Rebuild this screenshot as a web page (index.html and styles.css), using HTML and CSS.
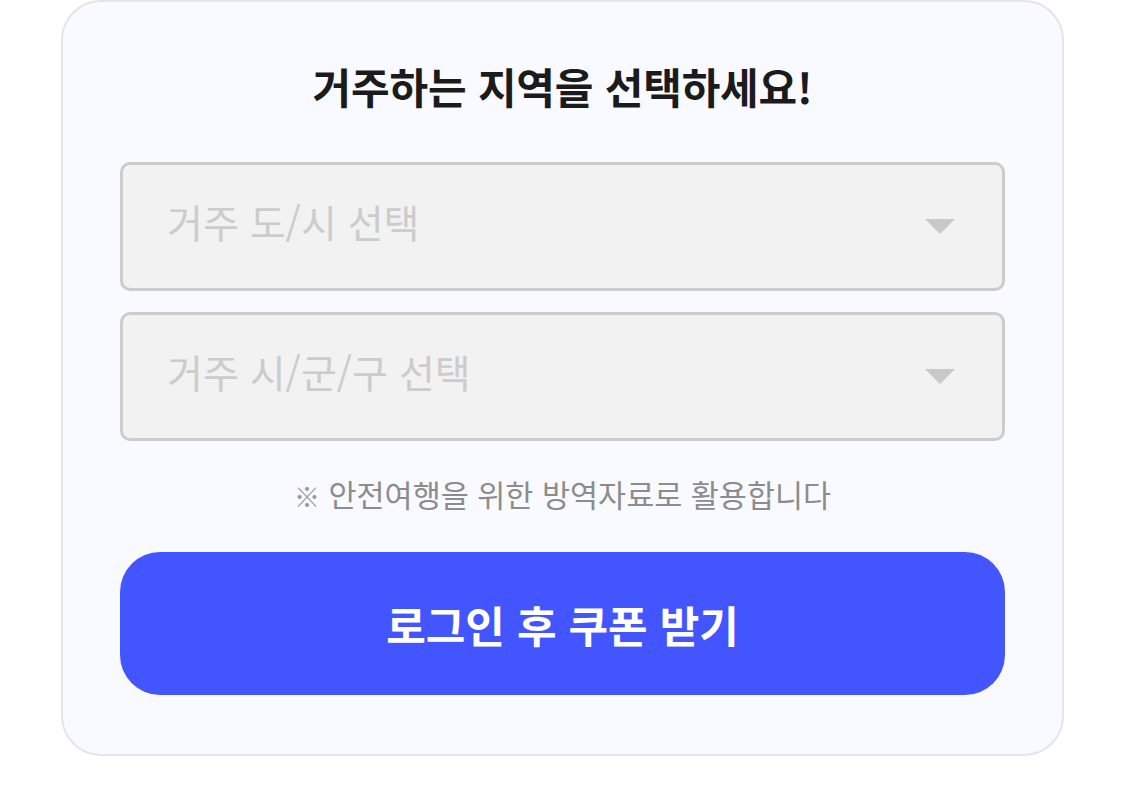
FILE: index.html
```html
<!DOCTYPE html>
<html lang="ko">
<head>
  <meta charset="UTF-8">
  <meta name="viewport" content="width=device-width, initial-scale=1.0">
  <title>지역 선택</title>
  <link rel="stylesheet" href="styles.css">
</head>
<body>

  <div class="card">
    <h2 class="title">거주하는 지역을 선택하세요!</h2>

    <div class="select-box">
      <span class="placeholder">거주 도/시 선택</span>
      <svg class="arrow" width="30" height="15" viewBox="0 0 30 15"><path d="M0 0 H30 L15 15 Z" fill="#c9c9c9"/></svg>
    </div>

    <div class="select-box">
      <span class="placeholder">거주 시/군/구 선택</span>
      <svg class="arrow" width="30" height="15" viewBox="0 0 30 15"><path d="M0 0 H30 L15 15 Z" fill="#c9c9c9"/></svg>
    </div>

    <p class="note"><span class="mark">※</span> 안전여행을 위한 방역자료로 활용합니다</p>

    <button class="submit">로그인 후 쿠폰 받기</button>
  </div>

</body>
</html>
```

FILE: styles.css
```css
body {
  margin: 0;
  background: #fff;
  font-family: 'Noto Sans CJK KR', 'Noto Sans', sans-serif;
}

.card {
  width: 885px;
  margin: 0 auto;
  padding: 57px 57px 59px;
  border: 2px solid #e4e4ea;
  border-radius: 40px;
  background-color: #f9faff;
  display: flex;
  flex-direction: column;
}

.title {
  margin: 0 0 50px;
  font-size: 42px;
  line-height: 53px;
  font-weight: 700;
  text-align: center;
  color: #1b1b1b;
  letter-spacing: -0.2px;
}

.select-box {
  height: 123px;
  padding: 0 47px 0 44px;
  border: 3px solid #cccccc;
  border-radius: 10px;
  background-color: #f2f2f2;
  display: flex;
  align-items: center;
  justify-content: space-between;
}

.select-box + .select-box {
  margin-top: 21px;
}

.placeholder {
  font-size: 39px;
  color: #cccccc;
  margin-top: -12px;
}

.note {
  margin: 32px 0 37px;
  font-size: 30.5px;
  line-height: 42px;
  text-align: center;
  color: #8c8c8c;
}

.mark {
  font-size: 26px;
  line-height: 0;
  font-weight: 700;
  color: #999;
}

.submit {
  height: 143px;
  border: none;
  border-radius: 40px;
  background-color: #4355ff;
  color: #fff;
  font-family: inherit;
  font-size: 43px;
  font-weight: 700;
  cursor: pointer;
}
```
